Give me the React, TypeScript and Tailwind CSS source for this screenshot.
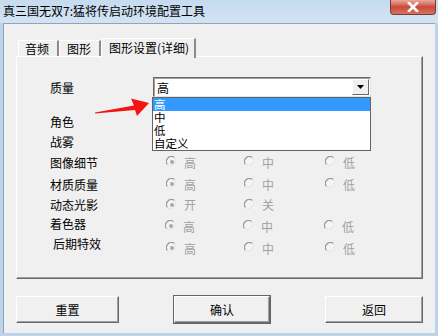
import React from 'react';

const font = { fontFamily: '"Noto Sans CJK SC", "Liberation Sans", sans-serif' };

const Radio = ({ checked }: { checked?: boolean }) => (
  <svg width="12" height="12" viewBox="0 0 12 12" className="shrink-0">
    <circle cx="6" cy="6" r="5" fill="#f4f4f4" />
    <path d="M1.5 8.5 A5 5 0 0 1 8.5 1.5" stroke="#9a9a9a" strokeWidth="1.2" fill="none" />
    <path d="M8.5 1.5 A5 5 0 0 1 1.5 8.5" stroke="#e6e6e6" strokeWidth="1.2" fill="none" />
    {checked && <circle cx="6" cy="6" r="2" fill="#a8a8a8" />}
  </svg>
);

const RadioGroup = ({ options, pl = 'pl-[13px]' }: { options: string[]; pl?: string }) => (
  <div className={`flex items-center ${pl}`}>
    {options.map((o, i) => (
      <div key={o} className={`flex items-center gap-[6px] ${i === 0 ? 'w-[78px]' : 'w-[81px]'}`}>
        <Radio checked={i === 0} />
        <span className="text-[12px] leading-[13px] text-[#a0a0a0]">{o}</span>
      </div>
    ))}
  </div>
);

const Row = ({
  label,
  h = 'h-[20px]',
  mt = '',
  labelCls = '',
  children,
}: {
  label: string;
  h?: string;
  mt?: string;
  labelCls?: string;
  children?: React.ReactNode;
}) => (
  <div className={`flex items-center ${h} ${mt}`}>
    <div className={`w-[136px] pl-[33px] text-[12px] leading-[13px] text-black ${labelCls}`}>{label}</div>
    {children}
  </div>
);

const btn =
  'h-[27px] flex items-center justify-center text-[12px] text-black bg-[#f0f0f0] border border-t-white border-l-white border-r-[#696969] border-b-[#696969] shadow-[inset_-1px_-1px_0_#a0a0a0]';

const item = 'h-[13px] pl-[1px] text-[11.5px] leading-[13px]';

export default function App() {
  return (
    <div className="relative w-[438px] h-[336px] bg-[#bcd3ea] flex flex-col overflow-hidden" style={font}>
      {/* title bar */}
      <div className="h-[23px] flex justify-between bg-gradient-to-b from-[#c6dbf0] to-[#d4e3f2]">
        <div className="pl-[3px] pt-[3px] text-[12px] leading-[16px] text-black">真三国无双7:猛将传启动环境配置工具</div>
        <div className="mr-[2px] w-[46px] h-[15px] rounded-b-[4px] border border-t-0 border-[#7a3a34] bg-gradient-to-b from-[#e9aa9c] via-[#c9493a] to-[#d9725d] flex items-center justify-center">
          <svg width="12" height="10" viewBox="0 0 12 10">
            <path d="M2 1 L10 9 M10 1 L2 9" stroke="#fff" strokeWidth="2.6" strokeLinecap="square" />
          </svg>
        </div>
      </div>

      {/* client area */}
      <div className="flex-1 mx-[3px] mb-[3px] bg-[#f0f0f0] border-t border-l border-[#8ea4bb] px-[12px] pt-[13px] flex flex-col">
        {/* tabs */}
        <div className="flex items-end h-[19px] pl-[2px] text-[12px] text-black">
          <div className="h-[17px] w-[41px] pl-[6px] border-t border-l border-white border-r-2 border-r-[#8a8a8a] leading-[16px] mb-[-1px]">音频</div>
          <div className="h-[17px] w-[42px] pl-[7px] border-t border-l border-white border-r-2 border-r-[#8a8a8a] leading-[16px] mb-[-1px]">图形</div>
          <div className="relative z-10 h-[20px] w-[95px] pl-[7px] bg-[#f0f0f0] border-t border-l border-white border-r-2 border-r-[#8a8a8a] leading-[18px] mb-[-2px]">图形设置(详细)</div>
        </div>

        {/* panel */}
        <div className="h-[223px] border border-t-white border-l-white border-r-[#696969] border-b-[#696969] shadow-[inset_-1px_-1px_0_#a0a0a0] pt-[20px] flex flex-col">
          <Row label="质量">
            <div className="w-[218px] h-[20px] bg-white border border-t-[#696969] border-l-[#696969] border-r-[#e3e3e3] border-b-[#e3e3e3] shadow-[inset_1px_1px_0_#a0a0a0] flex items-center justify-between pl-[3px] pr-[1px]">
              <span className="text-[12px] leading-[13px]">高</span>
              <div className="w-[17px] h-[16px] bg-[#f0f0f0] border border-t-white border-l-white border-r-[#696969] border-b-[#696969] flex items-center justify-center">
                <svg width="7" height="4" viewBox="0 0 7 4"><path d="M0 0 H7 L3.5 4 Z" fill="#000" /></svg>
              </div>
            </div>
          </Row>
          <Row label="角色" mt="mt-[14px]" />
          <Row label="战雾" h="h-[21px]" />
          <Row label="图像细节">
            <RadioGroup options={['高', '中', '低']} />
          </Row>
          <Row label="材质质量" mt="mt-[2px]">
            <RadioGroup options={['高', '中', '低']} />
          </Row>
          <Row label="动态光影" h="h-[21px]">
            <RadioGroup options={['开', '关']} />
          </Row>
          <Row label="着色器" labelCls="mb-[5px]" mt="mt-[1px]">
            <RadioGroup options={['高', '中', '低']} pl="pl-[12px]" />
          </Row>
          <Row label="后期特效" labelCls="mb-[9px] pl-[36px]" mt="mt-[2px]">
            <RadioGroup options={['高', '中', '低']} />
          </Row>
        </div>

        {/* buttons */}
        <div className="mt-[17px] flex justify-between">
          <div className={`${btn} w-[103px]`}>重置</div>
          <div className={`${btn} w-[96px] outline outline-1 outline-[#646464]`}>确认</div>
          <div className={`${btn} w-[98px]`}>返回</div>
        </div>
      </div>

      {/* dropdown list */}
      <div className="absolute left-[152px] top-[97px] w-[219px] h-[54px] bg-white border border-[#646464]">
        <div className={`${item} bg-[#3399ff] text-white`}>高</div>
        <div className={item}>中</div>
        <div className={item}>低</div>
        <div className={item}>自定义</div>
      </div>

      {/* red arrow */}
      <svg className="absolute left-0 top-0" width="438" height="336" viewBox="0 0 438 336" pointerEvents="none">
        <polygon points="95,112.5 134,105.5 131,98.5 149,103 137,116 135,110 95,113.5" fill="#f41414" />
      </svg>
    </div>
  );
}
